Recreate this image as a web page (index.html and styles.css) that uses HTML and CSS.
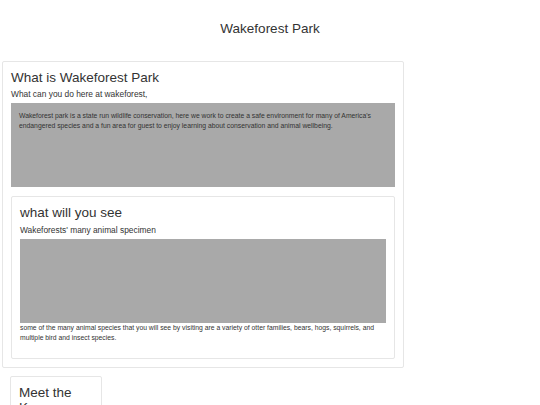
FILE: index.html
```html
<!DOCTYPE html>
<html lang="en">
<head>
<meta charset="utf-8">
<title>Wakeforest Park</title>
<link rel="stylesheet" href="styles.css">
</head>
<body>
<header class="site-header">
  <h1 class="site-title">Wakeforest Park</h1>
</header>
<main class="page">
  <section class="card card-main">
    <h2 class="card-title">What is Wakeforest Park</h2>
    <p class="card-sub">What can you do here at wakeforest,</p>
    <div class="panel">
      <p class="small-text">Wakeforest park is a state run wildlife conservation, here we work to create a safe environment for many of America's endangered species and a fun area for guest to enjoy learning about conservation and animal wellbeing.</p>
    </div>
    <section class="card card-inner">
      <h2 class="card-title">what will you see</h2>
      <p class="card-sub">Wakeforests' many animal specimen</p>
      <div class="panel panel-image"></div>
      <p class="small-text caption">some of the many animal species that you will see by visiting are a variety of otter families, bears, hogs, squirrels, and multiple bird and insect species.</p>
    </section>
  </section>
  <section class="card card-meet">
    <h2 class="card-title">Meet the Keepers</h2>
  </section>
</main>
</body>
</html>
```
FILE: styles.css
```css
html, body {
  margin: 0;
  padding: 0;
  background: #ffffff;
}

body {
  font-family: "Liberation Sans", Arial, sans-serif;
  color: #333333;
}

.site-header {
  padding-top: 22px;
  text-align: center;
}

.site-title {
  margin: 0;
  font-size: 13.5px;
  line-height: 1.1;
  font-weight: 400;
}

.page {
  padding-top: 24px;
}

.card {
  box-sizing: border-box;
  border: 1px solid #e6e6e6;
  border-radius: 2px;
  padding: 8px;
  background: #ffffff;
}

.card-main {
  width: 402px;
  margin-left: 2px;
}

.card-title {
  margin: 0;
  font-size: 13.5px;
  line-height: 1.15;
  font-weight: 400;
}

.card-sub {
  margin: 3px 0 3px;
  font-size: 8.4px;
  line-height: 12px;
}

.panel {
  background: #a9a9a9;
  height: 84px;
  box-sizing: border-box;
  padding: 8px;
}

.small-text {
  margin: 0;
  font-size: 6.8px;
  line-height: 10px;
}

.card-inner {
  margin-top: 9px;
}

.caption {
  margin-bottom: 7px;
}

.card-meet {
  width: 92px;
  margin-top: 8px;
  margin-left: 10px;
}
```
